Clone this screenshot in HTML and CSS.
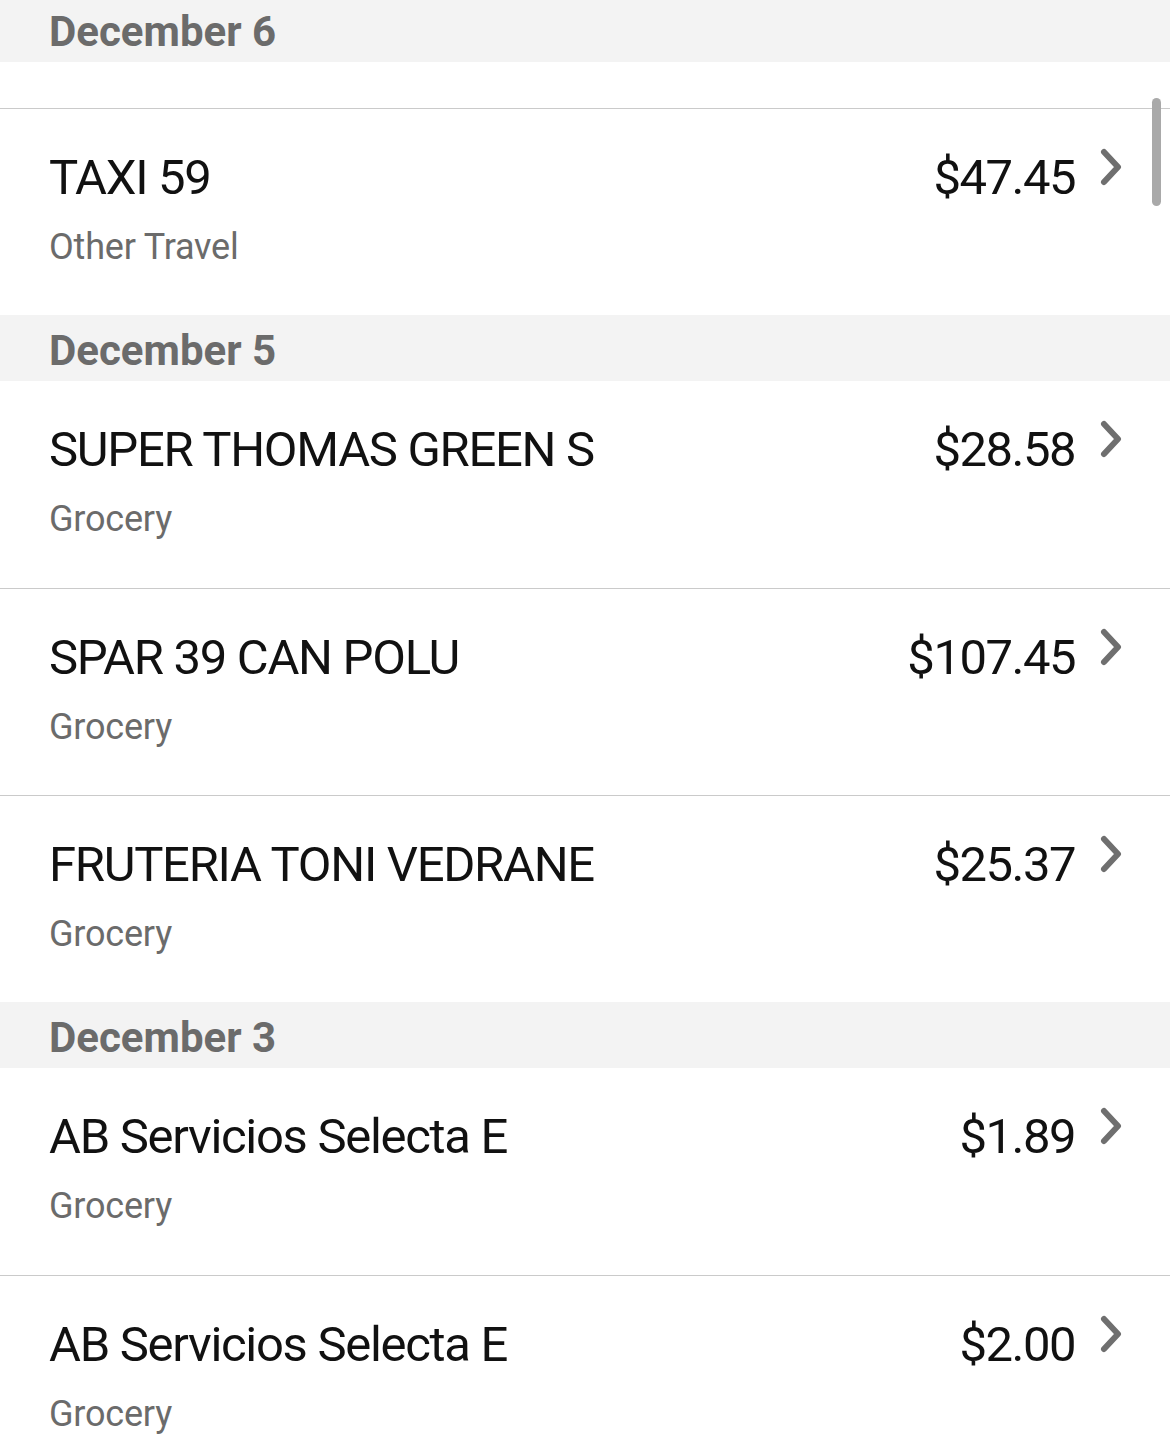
FILE: index.html
```html
<!DOCTYPE html>
<html lang="en">
<head>
<meta charset="utf-8">
<title>Transactions</title>
<link rel="stylesheet" href="styles.css">
</head>
<body>
<div class="screen">
  <div class="list">
    <section class="section">
      <div class="section-header">December 6</div>
      <div class="spacer"></div>
      <div class="row">
        <div class="info">
          <div class="title">TAXI 59</div>
          <div class="category">Other Travel</div>
        </div>
        <div class="amount">$47.45</div>
        <svg class="chevron" width="24" height="40" viewBox="0 0 24 40"><path d="M5 5 L19 20 L5 35" fill="none" stroke="#6f6f6f" stroke-width="6" stroke-linecap="round" stroke-linejoin="round"/></svg>
      </div>
    </section>
    <section class="section">
      <div class="section-header">December 5</div>
      <div class="row">
        <div class="info">
          <div class="title">SUPER THOMAS GREEN S</div>
          <div class="category">Grocery</div>
        </div>
        <div class="amount">$28.58</div>
        <svg class="chevron" width="24" height="40" viewBox="0 0 24 40"><path d="M5 5 L19 20 L5 35" fill="none" stroke="#6f6f6f" stroke-width="6" stroke-linecap="round" stroke-linejoin="round"/></svg>
      </div>
      <div class="row">
        <div class="info">
          <div class="title">SPAR 39 CAN POLU</div>
          <div class="category">Grocery</div>
        </div>
        <div class="amount">$107.45</div>
        <svg class="chevron" width="24" height="40" viewBox="0 0 24 40"><path d="M5 5 L19 20 L5 35" fill="none" stroke="#6f6f6f" stroke-width="6" stroke-linecap="round" stroke-linejoin="round"/></svg>
      </div>
      <div class="row">
        <div class="info">
          <div class="title">FRUTERIA TONI VEDRANE</div>
          <div class="category">Grocery</div>
        </div>
        <div class="amount">$25.37</div>
        <svg class="chevron" width="24" height="40" viewBox="0 0 24 40"><path d="M5 5 L19 20 L5 35" fill="none" stroke="#6f6f6f" stroke-width="6" stroke-linecap="round" stroke-linejoin="round"/></svg>
      </div>
    </section>
    <section class="section">
      <div class="section-header">December 3</div>
      <div class="row">
        <div class="info">
          <div class="title">AB Servicios Selecta E</div>
          <div class="category">Grocery</div>
        </div>
        <div class="amount">$1.89</div>
        <svg class="chevron" width="24" height="40" viewBox="0 0 24 40"><path d="M5 5 L19 20 L5 35" fill="none" stroke="#6f6f6f" stroke-width="6" stroke-linecap="round" stroke-linejoin="round"/></svg>
      </div>
      <div class="row">
        <div class="info">
          <div class="title">AB Servicios Selecta E</div>
          <div class="category">Grocery</div>
        </div>
        <div class="amount">$2.00</div>
        <svg class="chevron" width="24" height="40" viewBox="0 0 24 40"><path d="M5 5 L19 20 L5 35" fill="none" stroke="#6f6f6f" stroke-width="6" stroke-linecap="round" stroke-linejoin="round"/></svg>
      </div>
    </section>
  </div>
  <div class="scrollbar"></div>
</div>
</body>
</html>
```

FILE: styles.css
```css
html, body {
  margin: 0;
  padding: 0;
  background: #ffffff;
}

body {
  font-family: Roboto, "Liberation Sans", sans-serif;
  color: #111111;
}

.screen {
  position: relative;
  width: 1170px;
  height: 1456px;
  overflow: hidden;
}

.list {
  margin-top: -4px;
}

.section-header {
  height: 66px;
  box-sizing: border-box;
  padding: 6px 0 0 49px;
  background: #f3f3f3;
  color: #6b6b6b;
  font-size: 42px;
  font-weight: 700;
  line-height: 60px;
}

.spacer {
  height: 46px;
}

.row {
  display: flex;
  align-items: flex-start;
  height: 206.34px;
  padding: 0 47px 0 49px;
}

.spacer + .row,
.row + .row {
  border-top: 1px solid #cacaca;
}

.info {
  flex: 1;
  min-width: 0;
  padding-top: 39px;
}

.title {
  font-size: 49px;
  line-height: 60px;
  letter-spacing: -1.3px;
  color: #111111;
  white-space: nowrap;
}

.category {
  margin-top: 17px;
  font-size: 36px;
  line-height: 44px;
  letter-spacing: -0.2px;
  color: #6b6b6b;
}

.amount {
  padding-top: 39px;
  font-size: 49px;
  line-height: 60px;
  letter-spacing: -1.5px;
  color: #111111;
}

.chevron {
  margin: 38px 0 0 24px;
  flex-shrink: 0;
}

.scrollbar {
  position: absolute;
  top: 98px;
  left: 1152px;
  width: 9px;
  height: 108px;
  border-radius: 5px;
  background: #a9a9a9;
}
```
